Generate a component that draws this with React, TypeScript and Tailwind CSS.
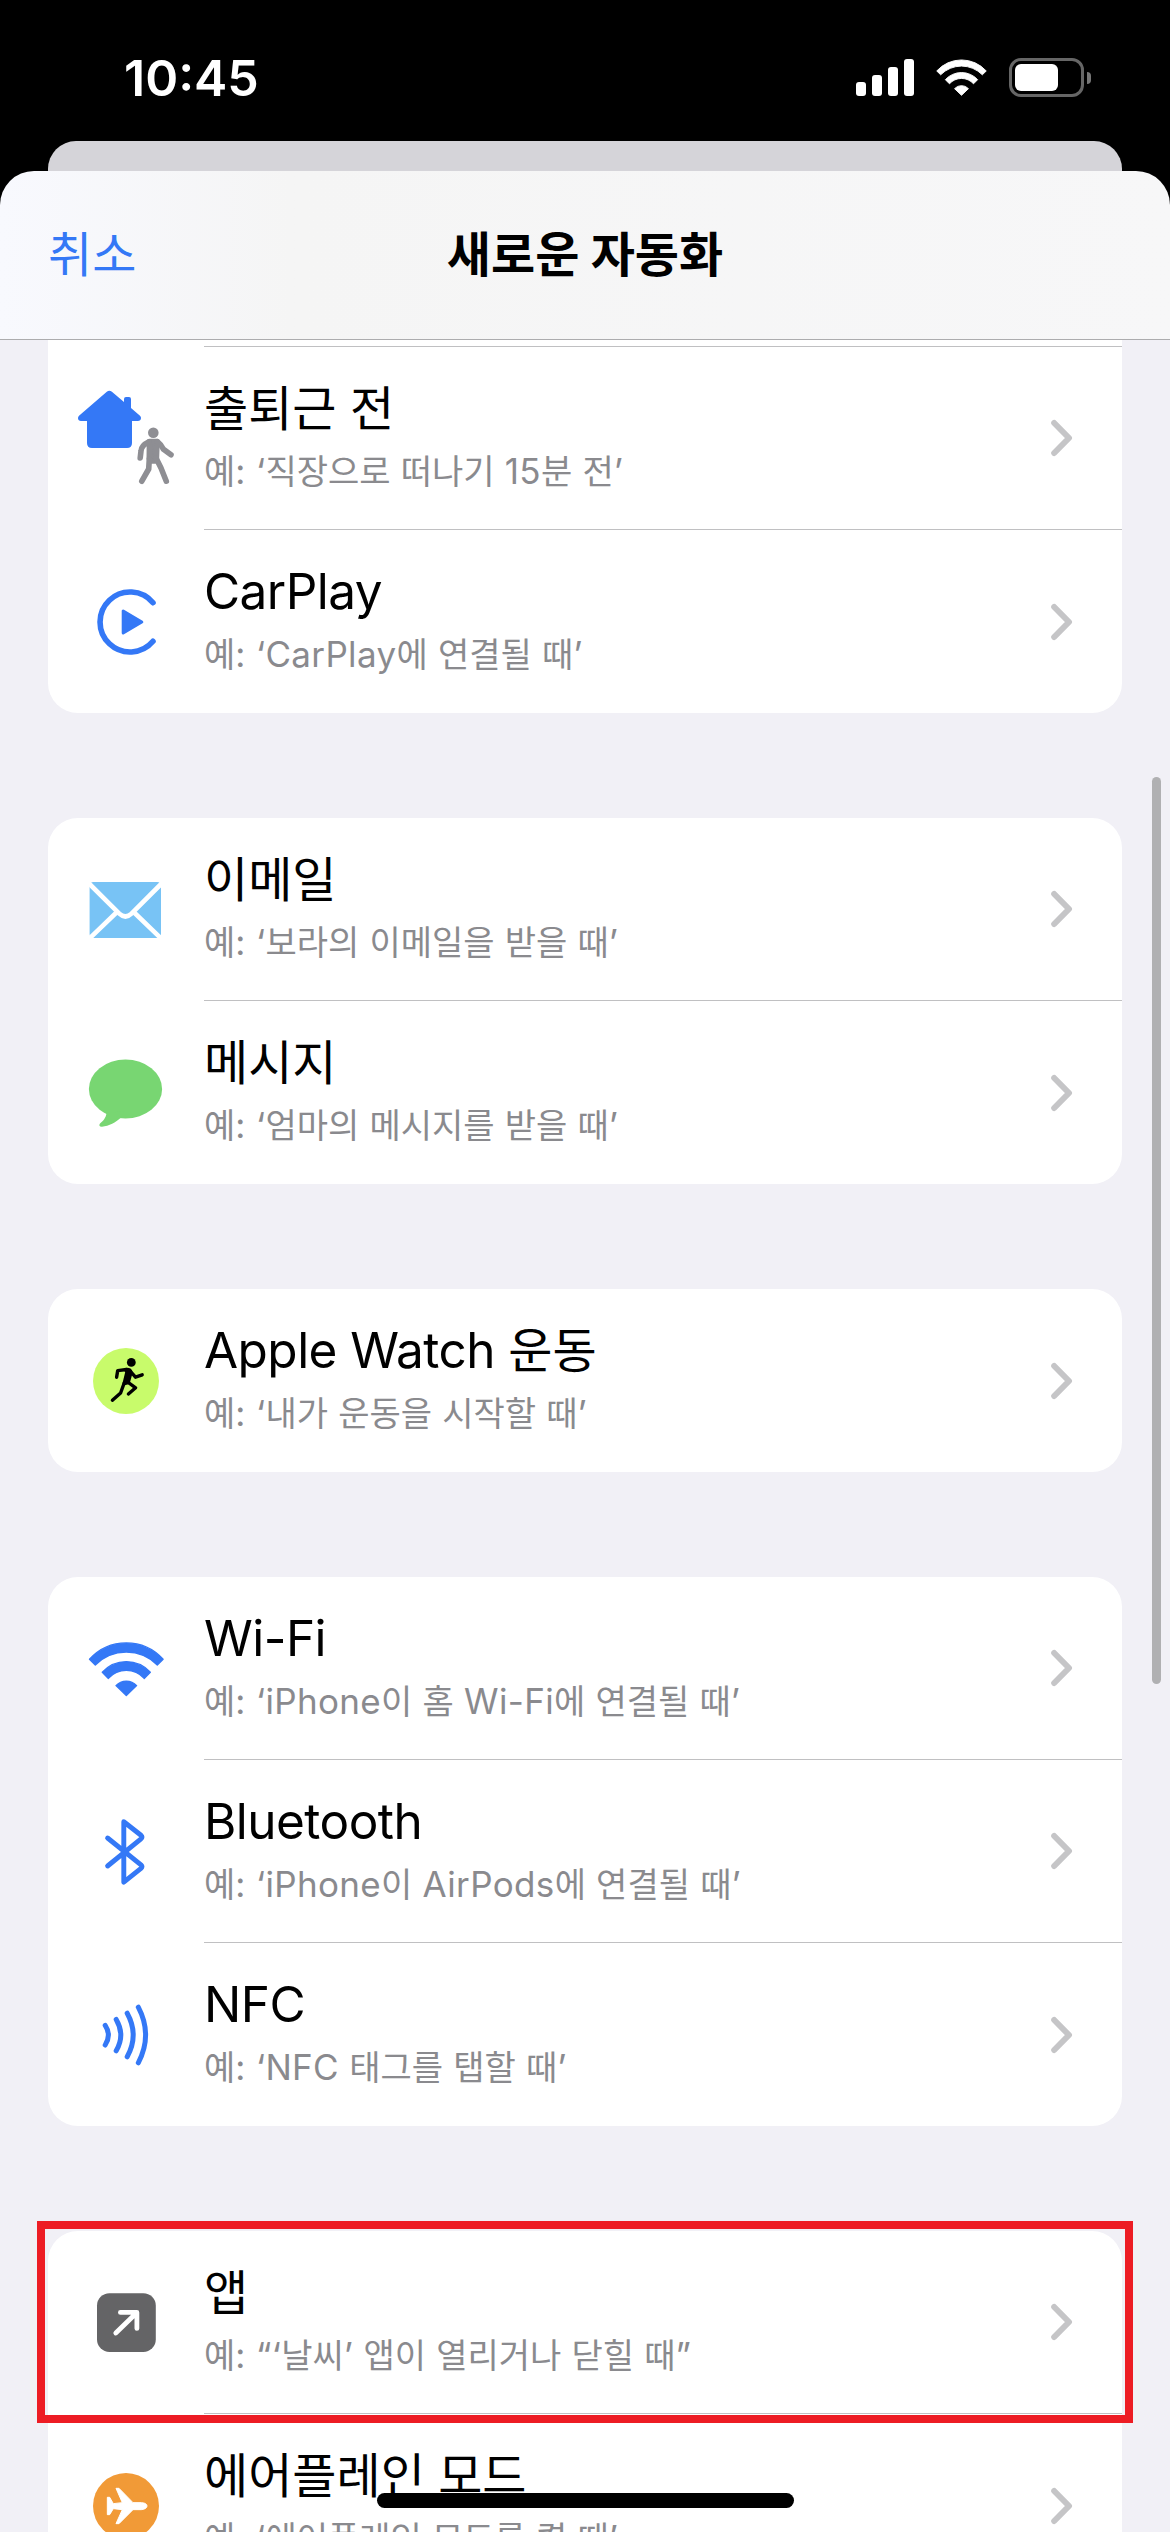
import type { ReactNode } from "react";

type Automation = {
  title: string;
  example: string;
  icon: ReactNode;
};

const WifiShape = () => (
  <g strokeWidth="1.4" strokeLinejoin="round">
    <path d="M41.5 82.3A49.5 49.5 0 0 1 115.1 82.3L109.3 88A43.5 43.5 0 0 0 47.3 88Z" />
    <path d="M54.3 95.2A32.5 32.5 0 0 1 102.3 95.2L96.2 101.4A24 24 0 0 0 60.4 101.4Z" />
    <path d="M68 108.6A14 14 0 0 1 88.6 108.6L78.3 118.5Z" />
  </g>
);

const CommuteIcon = () => (
  <>
    <path
      fill="#3478f6"
      d="M58.8 44.8Q61.3 42.8 63.9 44.8L76 55V52Q76 50 78 50H81Q83 50 83 52V61L92 68.7Q93.2 69.8 93 71.3Q92.7 74 89.8 74H84V96Q84 101 79 101H44Q39 101 39 96V74H33Q30.2 74 30 71.3Q29.9 69.8 31 68.7Z"
    />
    <g
      fill="none"
      stroke="#8e8e93"
      strokeWidth="5.6"
      strokeLinecap="round"
      strokeLinejoin="round"
    >
      <circle cx="105.3" cy="85.7" r="5.3" fill="#8e8e93" stroke="none" />
      <path
        d="M101.5 94.6H109L108.4 111L107 114H102L101.3 111Z"
        fill="#8e8e93"
      />
      <path d="M101 94.8Q93.2 98.5 93 104L92.2 111" />
      <path d="M109.5 94.8Q112.5 97 115.5 102.3L123 107.8" />
      <path d="M101.3 112L100.7 122L93.8 134.2" />
      <path d="M108 111L113 121L118.3 134.2" />
    </g>
  </>
);

const CarPlayIcon = () => (
  <g stroke="#3478f6" strokeLinecap="round" strokeLinejoin="round">
    <path
      d="M105 72.7A30 30 0 1 0 105 111.3"
      fill="none"
      strokeWidth="5.6"
    />
    <path d="M75.2 81V103L93.8 92Z" fill="#3478f6" strokeWidth="3" />
  </g>
);

const MailIcon = () => (
  <>
    <rect x="41.6" y="64" width="71.4" height="56" rx="4" fill="#78c3f5" />
    <g fill="none" stroke="white" strokeWidth="4.6">
      <path d="M39 63.5L71.3 95.6Q77.4 101.4 83.5 95.6L115.6 63.5" />
      <path d="M69.5 93.5L39 122.8M85.1 93.5L115.6 122.8" />
    </g>
  </>
);

const MessageIcon = () => (
  <g fill="#78d672">
    <ellipse cx="77.5" cy="88" rx="36.6" ry="29.4" />
    <path d="M58.5 112C58 117 55 120 52 122.6Q50 125.8 54 125.7C61 125.3 68 121 72.5 117L77 110Z" />
  </g>
);

const WorkoutIcon = () => (
  <>
    <circle cx="78" cy="92" r="33" fill="#c8fb6b" />
    <circle cx="83.3" cy="73.4" r="4.4" />
    <g
      fill="none"
      stroke="black"
      strokeWidth="3.4"
      strokeLinecap="round"
      strokeLinejoin="round"
    >
      <path d="M78.5 80.5L69.7 81.6L68.6 88.2" />
      <path d="M77.5 80.6Q83 79.8 82.8 84L80.2 93.5L76.2 94.5L79 83Z" fill="black" />
      <path d="M83 83L87.5 88.2L94.2 85.8" />
      <path d="M79 92.5L87.6 98.8L80.4 105" />
      <path d="M76.2 94L72.6 104L64.4 111.2" />
    </g>
  </>
);

const WifiIcon = () => (
  <g fill="#3478f6" stroke="#3478f6">
    <WifiShape />
  </g>
);

const BluetoothIcon = () => (
  <path
    d="M59.6 78L93 104.8Q95 106.6 93 108.4L75.8 122.2V61.8L93 75.2Q95 77 93 78.8L59.6 106"
    fill="none"
    stroke="#3478f6"
    strokeWidth="4.9"
    strokeLinecap="round"
    strokeLinejoin="round"
  />
);

const NfcIcon = () => (
  <g fill="none" stroke="#3478f6" strokeWidth="5" strokeLinecap="round">
    <path d="M57.2 82.4Q63.6 92 57.2 102" />
    <path d="M68.2 76.4Q77.4 92 68.2 107.8" />
    <path d="M79.2 70.2Q91.2 92 79.2 113.8" />
    <path d="M90.3 64.2Q104.9 92 90.3 119.8" />
  </g>
);

const AppIcon = () => (
  <>
    <rect x="49" y="62.2" width="58.8" height="58.8" rx="12.5" fill="#646466" />
    <path
      d="M67.8 102L88.4 82M72.4 81.4H88.9V97.4"
      fill="none"
      stroke="white"
      strokeWidth="4.8"
      strokeLinecap="round"
      strokeLinejoin="round"
    />
  </>
);

const AirplaneIcon = () => (
  <>
    <circle cx="78" cy="92" r="33" fill="#f19a37" />
    <path
      transform="translate(22 -134) scale(0.3333)"
      fill="white"
      stroke="white"
      strokeWidth="3"
      strokeLinejoin="round"
      d="M112 652H119L130 671L157 668L138 625H147L189 668H214Q231 669 231 678Q231 687 214 689H189L147 731H138L157 689L130 686L119 704H112Z"
    />
  </>
);

const groups: Automation[][] = [
  [
    {
      title: "출퇴근 전",
      example: "예: ‘직장으로 떠나기 15분 전’",
      icon: <CommuteIcon />,
    },
    {
      title: "CarPlay",
      example: "예: ‘CarPlay에 연결될 때’",
      icon: <CarPlayIcon />,
    },
  ],
  [
    {
      title: "이메일",
      example: "예: ‘보라의 이메일을 받을 때’",
      icon: <MailIcon />,
    },
    {
      title: "메시지",
      example: "예: ‘엄마의 메시지를 받을 때’",
      icon: <MessageIcon />,
    },
  ],
  [
    {
      title: "Apple Watch 운동",
      example: "예: ‘내가 운동을 시작할 때’",
      icon: <WorkoutIcon />,
    },
  ],
  [
    {
      title: "Wi-Fi",
      example: "예: ‘iPhone이 홈 Wi-Fi에 연결될 때’",
      icon: <WifiIcon />,
    },
    {
      title: "Bluetooth",
      example: "예: ‘iPhone이 AirPods에 연결될 때’",
      icon: <BluetoothIcon />,
    },
    {
      title: "NFC",
      example: "예: ‘NFC 태그를 탭할 때’",
      icon: <NfcIcon />,
    },
  ],
  [
    {
      title: "앱",
      example: "예: “‘날씨’ 앱이 열리거나 닫힐 때”",
      icon: <AppIcon />,
    },
    {
      title: "에어플레인 모드",
      example: "예: ‘에어플레인 모드를 켤 때’",
      icon: <AirplaneIcon />,
    },
  ],
];

// Hangul keeps the parent's size, everything else gets the Latin one
const MixedText = ({ text, latin }: { text: string; latin: string }) => (
  <>
    {text.split(/([가-힣]+)/).map((part, i) =>
      i % 2 === 1 ? (
        part
      ) : (
        <span key={i} className={latin}>
          {part}
        </span>
      ),
    )}
  </>
);

const Row = ({ item, isLast }: { item: Automation; isLast: boolean }) => (
  <li className="flex h-[183px]">
    <svg viewBox="0 0 156 183" className="h-[183px] w-[156px] shrink-0">
      {item.icon}
    </svg>
    <div
      className={`flex flex-1 items-center justify-between pr-12 ${isLast ? "" : "border-b border-[#c0c0c2]"}`}
    >
      <div className="flex h-full flex-col pt-[31px] whitespace-pre">
        <p className="h-[60px] text-[48px] leading-[60px] text-black">
          <MixedText
            text={item.title}
            latin="text-[49.5px] tracking-[-0.011em]"
          />
        </p>
        <p className="mt-[3px] h-[60px] text-[34px] leading-[60px] text-[#8a8a8e]">
          <MixedText
            text={item.example}
            latin="text-[35px] tracking-[0.01em]"
          />
        </p>
      </div>
      <svg
        viewBox="0 0 24 40"
        className="h-10 w-6 shrink-0"
        fill="none"
        stroke="#c5c5c7"
        strokeWidth="6"
        strokeLinecap="round"
        strokeLinejoin="round"
      >
        <path d="M4.2 5L19 20L4.2 35" />
      </svg>
    </div>
  </li>
);

const StatusBar = () => (
  <div className="flex h-[141px] items-start justify-between pt-[58px] pr-[79px] pl-[124px] text-white">
    <span className="text-[50px] leading-10 font-semibold">10:45</span>
    <div className="flex items-start">
      <div className="mt-px flex h-[37px] items-end gap-1.5">
        <span className="h-3.5 w-2.5 rounded-[3px] bg-white" />
        <span className="h-[21px] w-2.5 rounded-[3px] bg-white" />
        <span className="h-[29px] w-2.5 rounded-[3px] bg-white" />
        <span className="h-[37px] w-2.5 rounded-[3px] bg-white" />
      </div>
      <svg
        viewBox="40.5 64.5 75.6 55"
        className="mt-px ml-[22px] h-[37px] w-[51px]"
        fill="white"
        stroke="white"
      >
        <WifiShape />
      </svg>
      <div className="ml-[22px] flex items-center">
        <div className="h-[39px] w-[75px] rounded-[12px] border-3 border-[#666] p-[3px]">
          <div className="h-[27px] w-[43px] rounded-[6px] bg-white" />
        </div>
        <span className="ml-[3px] h-3 w-1 rounded-r-full bg-[#777]" />
      </div>
    </div>
  </div>
);

export default function App() {
  return (
    <div className="relative flex h-[2532px] w-[1170px] flex-col overflow-hidden bg-black font-['Inter','Noto_Sans_CJK_KR',sans-serif]">
      <StatusBar />
      {/* sheet underneath */}
      <div className="mx-12 h-[30px] shrink-0 rounded-t-[28px] bg-[#d5d4d9]" />

      <div className="flex min-h-0 flex-1 flex-col">
        <header className="grid h-[169px] shrink-0 grid-cols-3 items-center rounded-t-[34px] border-b border-[#acacae] bg-linear-to-r from-[#f8f9fe] via-[#f5f5f5] via-25% to-[#f7f7f8] px-12">
          <button
            type="button"
            className="text-left text-[48px] leading-[60px] text-[#3478f6]"
          >
            취소
          </button>
          <h1 className="text-center text-[48px] leading-[60px] font-bold whitespace-nowrap text-black">
            새로운 자동화
          </h1>
        </header>

        <main className="min-h-0 flex-1 overflow-hidden bg-[#f1f0f6] px-12">
          {/* tail of the row scrolled behind the header */}
          <div className="flex h-[7px] justify-end bg-white">
            <div className="w-[918px] border-b border-[#c0c0c2]" />
          </div>
          <div className="flex flex-col gap-[105px]">
            {groups.map((group, i) => (
              <ul
                key={group[0].title}
                className={`bg-white ${i === 0 ? "rounded-b-[30px]" : "rounded-[30px]"}`}
              >
                {group.map((item, j) => (
                  <Row
                    key={item.title}
                    item={item}
                    isLast={j === group.length - 1}
                  />
                ))}
              </ul>
            ))}
          </div>
        </main>
      </div>

      {/* scrollbar */}
      <div className="absolute top-[777px] right-[9px] h-[907px] w-[9px] rounded-full bg-[#b0b0b2]" />
      {/* highlighted row */}
      <div className="absolute top-[2221px] left-[37px] h-[202px] w-[1096px] border-8 border-[#ed1c24]" />
      {/* home indicator */}
      <div className="absolute top-[2493px] left-[377px] h-[15px] w-[417px] rounded-full bg-black" />
    </div>
  );
}
